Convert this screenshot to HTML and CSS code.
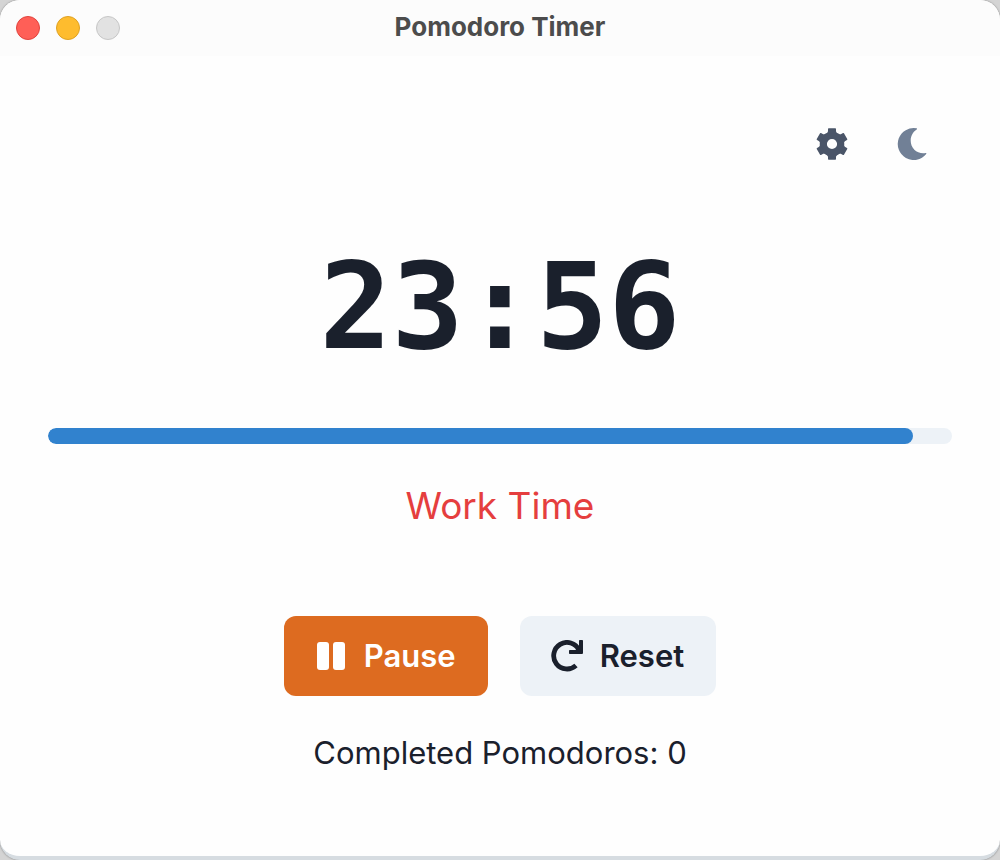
FILE: index.html
```html
<!DOCTYPE html>
<html lang="en">
<head>
<meta charset="utf-8">
<meta name="viewport" content="width=device-width, initial-scale=1">
<title>Pomodoro Timer</title>
<link rel="stylesheet" href="styles.css">
</head>
<body>
<div class="window">
  <header class="titlebar">
    <div class="lights">
      <button class="light light-close" aria-label="Close"></button>
      <button class="light light-minimize" aria-label="Minimize"></button>
      <button class="light light-zoom" aria-label="Zoom" disabled></button>
    </div>
    <h1 class="title">Pomodoro Timer</h1>
  </header>
  <main class="content">
    <div class="toolbar">
      <button class="icon-button settings" aria-label="Settings">
        <svg width="32" height="32" viewBox="-16 -16 32 32" fill="currentColor" aria-hidden="true">
          <circle r="8.7" fill="none" stroke="currentColor" stroke-width="7.2"/>
          <path id="tooth" d="M-5.500 -10.500Q-4 -11.500 -4 -13V-15Q-4 -15.700 -3.300 -15.700H3.300Q4 -15.700 4 -15V-13Q4 -11.500 5.500 -10.500Z"/>
          <use href="#tooth" transform="rotate(60)"/>
          <use href="#tooth" transform="rotate(120)"/>
          <use href="#tooth" transform="rotate(180)"/>
          <use href="#tooth" transform="rotate(240)"/>
          <use href="#tooth" transform="rotate(300)"/>
        </svg>
      </button>
      <button class="icon-button theme" aria-label="Toggle dark mode">
        <svg width="32" height="32" viewBox="0 0 32 32" fill="currentColor" aria-hidden="true"><path d="M20.600 .3A16 16 0 1 0 30.200 26.100Q31 25 29.600 25.100C21.500 26.500 14.700 20.500 14.700 12.700C14.700 8 17 4 20.700 1.600Q21.600 .6 20.600 .3Z"/></svg>
      </button>
    </div>
    <time class="clock">23:56</time>
    <div class="track" role="progressbar" aria-label="Time remaining" aria-valuemin="0" aria-valuemax="1500" aria-valuenow="1436">
      <div class="fill" style="width: 95.73%"></div>
    </div>
    <p class="mode">Work Time</p>
    <div class="controls">
      <button class="button pause">
        <svg width="32" height="32" viewBox="0 0 32 32" fill="currentColor" aria-hidden="true"><rect x="2" y="2" width="12" height="28" rx="3"/><rect x="18" y="2" width="12" height="28" rx="3"/></svg>
        Pause
      </button>
      <button class="button reset">
        <svg width="32" height="32" viewBox="0 0 32 32" aria-hidden="true"><path d="M28 10A13.300 13.300 0 1 0 25 25.500" fill="none" stroke="currentColor" stroke-width="4.800"/><path d="M28.800 0H31.200Q32 0 32 .8V13Q32 14 31 14H18.800Q18 14 18 13.200V10.800Q18 10 18.800 10H24.500L28 6V.8Q28 0 28.800 0Z" fill="currentColor"/></svg>
        Reset
      </button>
    </div>
    <p class="completed">Completed Pomodoros: 0</p>
  </main>
</div>
</body>
</html>
```
FILE: styles.css
```css
* {
  box-sizing: border-box;
}

body {
  margin: 0;
  background: #d4d4d4;
  color: #1a202c;
  font-family: Inter, "Liberation Sans", sans-serif;
}

button {
  border: 0;
  padding: 0;
  background: none;
  color: inherit;
  font: inherit;
}

.window {
  display: flex;
  flex-direction: column;
  min-height: 100vh;
  overflow: hidden;
  border-bottom: 4px solid #d6dce1;
  border-radius: 20px;
  background: #fefefe;
  box-shadow: 0 0 2px #777;
}

.titlebar {
  display: grid;
  grid-template-columns: 1fr auto 1fr;
  align-items: center;
  height: 56px;
  padding: 0 16px;
  background: #fcfcfc;
}

.lights {
  display: flex;
  gap: 16px;
}

.light {
  width: 24px;
  height: 24px;
  border: 1px solid;
  border-radius: 50%;
}

.light-close {
  border-color: #e0443e;
  background: #ff5f57;
}

.light-minimize {
  border-color: #dea123;
  background: #febc2e;
}

.light-zoom {
  border-color: #c6c6c6;
  background: #e2e2e2;
}

.title {
  margin: 0;
  padding-bottom: 2px;
  color: #4c4c4c;
  font-size: 26px;
  font-weight: 700;
  line-height: 32px;
}

.content {
  display: flex;
  flex-direction: column;
  align-items: center;
  padding: 48px;
}

.toolbar {
  display: flex;
  align-self: flex-end;
}

.icon-button {
  display: grid;
  place-items: center;
  width: 80px;
  height: 80px;
}

.settings {
  color: #4a5568;
}

.theme {
  color: #718096;
}

.clock {
  margin: 63px 0 61px;
  font-family: "DejaVu Sans Mono", monospace;
  font-size: 120px;
  font-weight: 700;
  line-height: 120px;
}

.track {
  align-self: stretch;
  height: 16px;
  overflow: hidden;
  border-radius: 8px;
  background: #edf2f7;
}

.fill {
  height: 100%;
  border-radius: 8px;
  background: #3182ce;
}

.mode {
  margin: 32px 0 80px;
  color: #e53e3e;
  font-size: 37px;
  line-height: 60px;
}

.controls {
  display: flex;
  gap: 32px;
}

.button {
  display: flex;
  align-items: center;
  gap: 17px;
  height: 80px;
  padding: 0 32px 2px 31px;
  border-radius: 12px;
  font-size: 31px;
  font-weight: 600;
}

.button svg {
  margin-top: 2px;
}

.pause {
  background: #dd6b20;
  color: #fff;
}

.reset {
  background: #edf2f7;
}

.completed {
  margin: 33px 0 0;
  font-size: 31px;
  line-height: 48px;
}
```
